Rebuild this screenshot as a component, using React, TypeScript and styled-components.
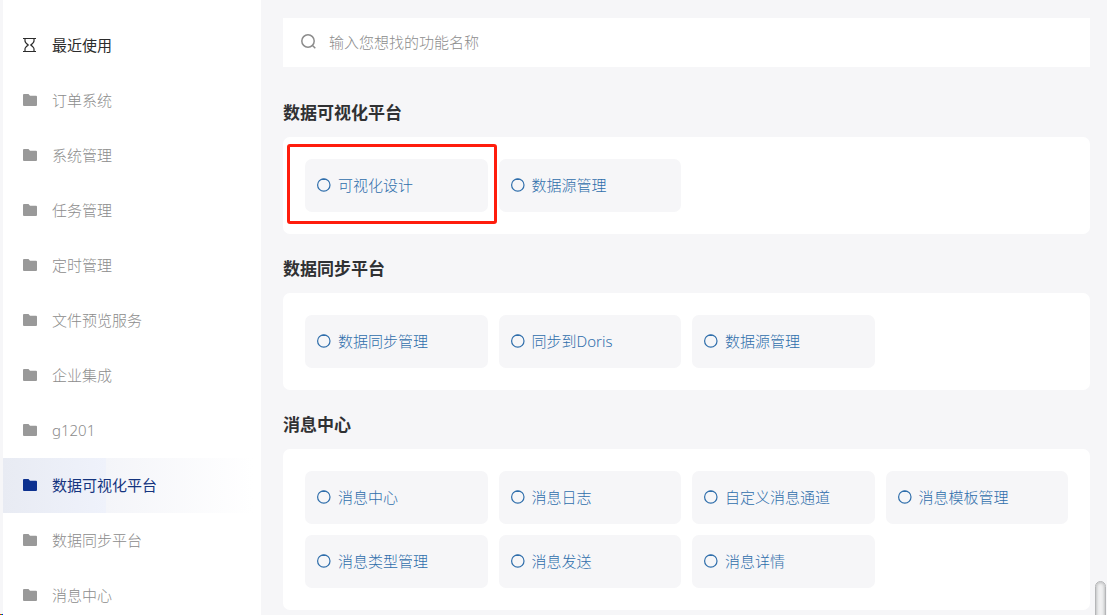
import React from "react";
import styled, { createGlobalStyle } from "styled-components";

const GlobalStyle = createGlobalStyle`
  *, *::before, *::after { box-sizing: border-box; }
  body {
    margin: 0;
    background: #f6f6f8;
    font-family: "Noto Sans", "Noto Sans CJK SC", sans-serif;
    font-size: 15px;
    font-weight: 300;
    line-height: 20px;
  }
`;

const Page = styled.div`
  display: flex;
  height: 100vh;
  overflow: hidden;
  padding-left: 3px;
`;

const Sidebar = styled.nav`
  flex: 0 0 258px;
  padding-top: 18px;
  background: #fff;
  overflow: hidden;
`;

const NavItem = styled.a<{ $tone: "recent" | "normal" | "active" }>`
  display: flex;
  align-items: center;
  gap: 15px;
  height: 55px;
  padding: 0 0 1px 20px;
  text-decoration: none;
  color: ${(p) => ({ recent: "#2b2b2b", normal: "#8c8c8c", active: "#14347f" })[p.$tone]};
  background: ${(p) =>
    p.$tone === "active"
      ? "linear-gradient(90deg, #e8ebf3 0%, #eff2fb 40%, #f4f5f9 40%, #fff 97%)"
      : "none"};
  font-weight: ${(p) => (p.$tone === "normal" ? 300 : 400)};

  svg {
    flex: none;
    color: ${(p) => ({ recent: "#2b2b2b", normal: "#999", active: "#0d318f" })[p.$tone]};
  }
`;

const Main = styled.main`
  flex: 1;
  min-width: 0;
  padding: 18px 17px 0 22px;
`;

const SearchBar = styled.label`
  display: flex;
  align-items: center;
  gap: 12px;
  height: 49px;
  padding: 0 18px 1px;
  background: #fff;
  color: #8c8c8c;
`;

const SearchInput = styled.input`
  flex: 1;
  min-width: 0;
  padding: 0;
  border: 0;
  outline: 0;
  background: none;
  font: inherit;
  color: #333;

  &::placeholder { color: #8c8c8c; opacity: 1; }
`;

const Section = styled.section`
  padding-top: 25px;

  ${SearchBar} + & { padding-top: 36px; }
`;

const SectionTitle = styled.h2`
  margin: 0;
  padding-bottom: 14px;
  font-size: 17px;
  line-height: 20px;
  font-weight: 700;
  color: #303133;
`;

const Card = styled.div`
  display: grid;
  grid-template-columns: repeat(4, minmax(0, 1fr));
  gap: 11px;
  padding: 22px;
  border-radius: 7px;
  background: #fff;
`;

const Tile = styled.a<{ $marked?: boolean }>`
  position: relative;
  display: flex;
  align-items: center;
  gap: 7px;
  height: 53px;
  padding: 0 12px 2px;
  border-radius: 7px;
  background: #f6f6f8;
  color: #2f6eab;
  text-decoration: none;
  white-space: nowrap;

  svg { flex: none; }

  &::after {
    content: "";
    display: ${(p) => (p.$marked ? "block" : "none")};
    position: absolute;
    inset: -15px -9px -12px -18px;
    border: 3px solid #ff1d0d;
    border-radius: 3px;
    z-index: 1;
  }
`;

const ScrollThumb = styled.div`
  position: fixed;
  right: 1px;
  bottom: -12px;
  width: 11px;
  height: 46px;
  border: 1px solid #b5b6b8;
  border-radius: 6px;
  background: #f0f0f1;
  box-shadow: inset 0 0 3px 1px #bfc0c2;
`;

const CornerMark = styled.div`
  position: fixed;
  left: 0;
  bottom: 0;
  width: 3px;
  height: 1px;
  background: linear-gradient(90deg, #f00 0 1px, #0c0 1px 2px, #00f 2px);
`;

const HourglassIcon = () => (
  <svg width="14" height="16" viewBox="0 0 14 16" fill="none" stroke="currentColor" strokeWidth="1.2" aria-hidden="true">
    <path d="M0 1.5h13M0 14.5h13M2 1.5v2.5q0 1.5 3.2 4q-3.2 2.5-3.2 4v2.5M11 1.5v2.5q0 1.5-3.2 4q3.2 2.5 3.2 4v2.5" />
  </svg>
);

const FolderIcon = () => (
  <svg width="14" height="12" viewBox="0 0 14 12" fill="currentColor" aria-hidden="true">
    <path d="M1 0h4.5l1.5 1.8H13a1 1 0 0 1 1 1V11a1 1 0 0 1-1 1H1a1 1 0 0 1-1-1V1a1 1 0 0 1 1-1z" />
  </svg>
);

const SearchIcon = () => (
  <svg width="16" height="16" viewBox="0 0 16 16" fill="none" stroke="currentColor" strokeWidth="1.5" aria-hidden="true">
    <circle cx="7" cy="7" r="6.2" />
    <path d="M11.5 11.5L14.3 14.3" />
  </svg>
);

const RingIcon = () => (
  <svg width="14" height="14" viewBox="0 0 14 14" fill="none" stroke="currentColor" strokeWidth="1.2" aria-hidden="true">
    <circle cx="6.8" cy="7" r="6.2" />
    <path d="M5 1.4h3.6" />
  </svg>
);

const folders = [
  "订单系统",
  "系统管理",
  "任务管理",
  "定时管理",
  "文件预览服务",
  "企业集成",
  "g1201",
  "数据可视化平台",
  "数据同步平台",
  "消息中心",
];

const activeFolder = "数据可视化平台";

const sections = [
  { title: "数据可视化平台", items: ["可视化设计", "数据源管理"], marked: "可视化设计" },
  { title: "数据同步平台", items: ["数据同步管理", "同步到Doris", "数据源管理"] },
  {
    title: "消息中心",
    items: ["消息中心", "消息日志", "自定义消息通道", "消息模板管理", "消息类型管理", "消息发送", "消息详情"],
  },
];

export default function App() {
  return (
    <Page>
      <GlobalStyle />
      <Sidebar>
        <NavItem href="#recent" $tone="recent">
          <HourglassIcon />
          最近使用
        </NavItem>
        {folders.map((name) => (
          <NavItem key={name} href={`#${name}`} $tone={name === activeFolder ? "active" : "normal"}>
            <FolderIcon />
            {name}
          </NavItem>
        ))}
      </Sidebar>
      <Main>
        <SearchBar>
          <SearchIcon />
          <SearchInput type="text" aria-label="输入您想找的功能名称" placeholder="输入您想找的功能名称" />
        </SearchBar>
        {sections.map((section) => (
          <Section key={section.title}>
            <SectionTitle>{section.title}</SectionTitle>
            <Card>
              {section.items.map((item) => (
                <Tile key={item} href={`#${item}`} $marked={item === section.marked}>
                  <RingIcon />
                  {item}
                </Tile>
              ))}
            </Card>
          </Section>
        ))}
      </Main>
      <ScrollThumb />
      <CornerMark />
    </Page>
  );
}
